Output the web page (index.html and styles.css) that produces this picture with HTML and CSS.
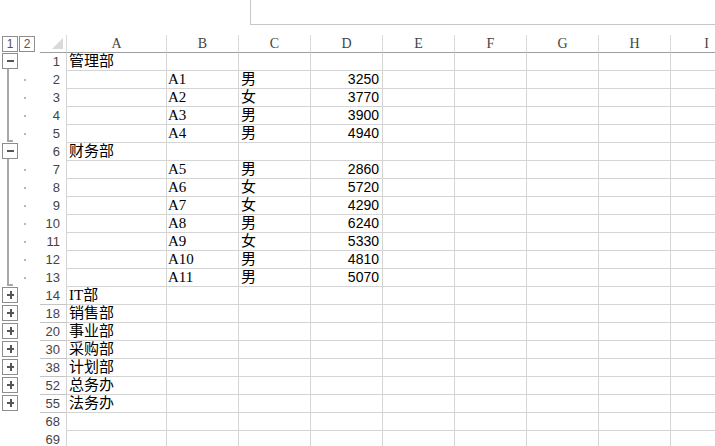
FILE: index.html
```html
<!DOCTYPE html>
<html>
<head>
<meta charset="utf-8">
<link rel="stylesheet" href="styles.css">
</head>
<body>
<div class="sheet">
  <div class="topbar"><div class="fbox"></div></div>

  <div class="row head">
    <div class="ol lv"><span class="lvbtn">1</span><span class="lvbtn">2</span></div>
    <div class="rn corner"><span class="tri"></span></div>
    <div class="c a ch">A</div><div class="c ch">B</div><div class="c ch">C</div><div class="c ch">D</div>
    <div class="c ch">E</div><div class="c ch">F</div><div class="c ch">G</div><div class="c ch">H</div><div class="c ch">I</div>
  </div>

  <div class="row"><div class="ol open"><span class="btn minus"></span></div><div class="rn">1</div>
    <div class="c a zh">管理部</div><div class="c"></div><div class="c"></div><div class="c"></div><div class="c"></div><div class="c"></div><div class="c"></div><div class="c"></div><div class="c"></div></div>
  <div class="row"><div class="ol line"><span class="dot"></span></div><div class="rn">2</div>
    <div class="c a"></div><div class="c t">A1</div><div class="c zh">男</div><div class="c n">3250</div><div class="c"></div><div class="c"></div><div class="c"></div><div class="c"></div><div class="c"></div></div>
  <div class="row"><div class="ol line"><span class="dot"></span></div><div class="rn">3</div>
    <div class="c a"></div><div class="c t">A2</div><div class="c zh">女</div><div class="c n">3770</div><div class="c"></div><div class="c"></div><div class="c"></div><div class="c"></div><div class="c"></div></div>
  <div class="row"><div class="ol line"><span class="dot"></span></div><div class="rn">4</div>
    <div class="c a"></div><div class="c t">A3</div><div class="c zh">男</div><div class="c n">3900</div><div class="c"></div><div class="c"></div><div class="c"></div><div class="c"></div><div class="c"></div></div>
  <div class="row"><div class="ol end"><span class="dot"></span></div><div class="rn">5</div>
    <div class="c a"></div><div class="c t">A4</div><div class="c zh">男</div><div class="c n">4940</div><div class="c"></div><div class="c"></div><div class="c"></div><div class="c"></div><div class="c"></div></div>

  <div class="row"><div class="ol open"><span class="btn minus"></span></div><div class="rn">6</div>
    <div class="c a zh">财务部</div><div class="c"></div><div class="c"></div><div class="c"></div><div class="c"></div><div class="c"></div><div class="c"></div><div class="c"></div><div class="c"></div></div>
  <div class="row"><div class="ol line"><span class="dot"></span></div><div class="rn">7</div>
    <div class="c a"></div><div class="c t">A5</div><div class="c zh">男</div><div class="c n">2860</div><div class="c"></div><div class="c"></div><div class="c"></div><div class="c"></div><div class="c"></div></div>
  <div class="row"><div class="ol line"><span class="dot"></span></div><div class="rn">8</div>
    <div class="c a"></div><div class="c t">A6</div><div class="c zh">女</div><div class="c n">5720</div><div class="c"></div><div class="c"></div><div class="c"></div><div class="c"></div><div class="c"></div></div>
  <div class="row"><div class="ol line"><span class="dot"></span></div><div class="rn">9</div>
    <div class="c a"></div><div class="c t">A7</div><div class="c zh">女</div><div class="c n">4290</div><div class="c"></div><div class="c"></div><div class="c"></div><div class="c"></div><div class="c"></div></div>
  <div class="row"><div class="ol line"><span class="dot"></span></div><div class="rn">10</div>
    <div class="c a"></div><div class="c t">A8</div><div class="c zh">男</div><div class="c n">6240</div><div class="c"></div><div class="c"></div><div class="c"></div><div class="c"></div><div class="c"></div></div>
  <div class="row"><div class="ol line"><span class="dot"></span></div><div class="rn">11</div>
    <div class="c a"></div><div class="c t">A9</div><div class="c zh">女</div><div class="c n">5330</div><div class="c"></div><div class="c"></div><div class="c"></div><div class="c"></div><div class="c"></div></div>
  <div class="row"><div class="ol line"><span class="dot"></span></div><div class="rn">12</div>
    <div class="c a"></div><div class="c t">A10</div><div class="c zh">男</div><div class="c n">4810</div><div class="c"></div><div class="c"></div><div class="c"></div><div class="c"></div><div class="c"></div></div>
  <div class="row"><div class="ol end"><span class="dot"></span></div><div class="rn">13</div>
    <div class="c a"></div><div class="c t">A11</div><div class="c zh">男</div><div class="c n">5070</div><div class="c"></div><div class="c"></div><div class="c"></div><div class="c"></div><div class="c"></div></div>

  <div class="row"><div class="ol"><span class="btn plus"></span></div><div class="rn hid">14</div>
    <div class="c a zh">IT部</div><div class="c"></div><div class="c"></div><div class="c"></div><div class="c"></div><div class="c"></div><div class="c"></div><div class="c"></div><div class="c"></div></div>
  <div class="row"><div class="ol"><span class="btn plus"></span></div><div class="rn hid">18</div>
    <div class="c a zh">销售部</div><div class="c"></div><div class="c"></div><div class="c"></div><div class="c"></div><div class="c"></div><div class="c"></div><div class="c"></div><div class="c"></div></div>
  <div class="row"><div class="ol"><span class="btn plus"></span></div><div class="rn hid">20</div>
    <div class="c a zh">事业部</div><div class="c"></div><div class="c"></div><div class="c"></div><div class="c"></div><div class="c"></div><div class="c"></div><div class="c"></div><div class="c"></div></div>
  <div class="row"><div class="ol"><span class="btn plus"></span></div><div class="rn hid">30</div>
    <div class="c a zh">采购部</div><div class="c"></div><div class="c"></div><div class="c"></div><div class="c"></div><div class="c"></div><div class="c"></div><div class="c"></div><div class="c"></div></div>
  <div class="row"><div class="ol"><span class="btn plus"></span></div><div class="rn hid">38</div>
    <div class="c a zh">计划部</div><div class="c"></div><div class="c"></div><div class="c"></div><div class="c"></div><div class="c"></div><div class="c"></div><div class="c"></div><div class="c"></div></div>
  <div class="row"><div class="ol"><span class="btn plus"></span></div><div class="rn hid">52</div>
    <div class="c a zh">总务办</div><div class="c"></div><div class="c"></div><div class="c"></div><div class="c"></div><div class="c"></div><div class="c"></div><div class="c"></div><div class="c"></div></div>
  <div class="row"><div class="ol"><span class="btn plus"></span></div><div class="rn hid">55</div>
    <div class="c a zh">法务办</div><div class="c"></div><div class="c"></div><div class="c"></div><div class="c"></div><div class="c"></div><div class="c"></div><div class="c"></div><div class="c"></div></div>
  <div class="row"><div class="ol"></div><div class="rn">68</div>
    <div class="c a"></div><div class="c"></div><div class="c"></div><div class="c"></div><div class="c"></div><div class="c"></div><div class="c"></div><div class="c"></div><div class="c"></div></div>
  <div class="row"><div class="ol"></div><div class="rn">69</div>
    <div class="c a"></div><div class="c"></div><div class="c"></div><div class="c"></div><div class="c"></div><div class="c"></div><div class="c"></div><div class="c"></div><div class="c"></div></div>
</div>
</body>
</html>
```

FILE: styles.css
```css
html, body {
  margin: 0;
  padding: 0;
  background: #ffffff;
}
.sheet {
  width: 715px;
  height: 446px;
  overflow: hidden;
  font-family: "Liberation Serif", "Noto Sans CJK SC", serif;
  color: #000;
}
.topbar {
  height: 35px;
}
.fbox {
  margin-left: 250px;
  height: 25px;
  box-sizing: border-box;
  border-left: 1px solid #c6c6c6;
  border-bottom: 1px solid #c6c6c6;
}
.row {
  display: flex;
  height: 18px;
  white-space: nowrap;
}
.ol {
  position: relative;
  flex: 0 0 40px;
  height: 18px;
  display: flex;
  align-items: flex-start;
}
.rn {
  flex: 0 0 27px;
  box-sizing: border-box;
  height: 18px;
  border-right: 1px solid #d4d4d4;
  text-align: right;
  padding-right: 6px;
  font-family: "Liberation Sans", sans-serif;
  font-size: 13px;
  line-height: 18px;
  color: #444;
}
.rn.hid {
  border-bottom: 1px solid #c4c4c4;
}
.c {
  flex: 0 0 72px;
  box-sizing: border-box;
  height: 18px;
  border-right: 1px solid #d4d4d4;
  border-bottom: 1px solid #d4d4d4;
  font-size: 14px;
  line-height: 17px;
  padding: 0 2px;
  overflow: hidden;
}
.c.a {
  flex-basis: 100px;
  padding-left: 2px;
}
.zh {
  font-size: 15px;
}
.t {
  padding-left: 1px;
  font-size: 15px;
}
.n {
  text-align: right;
  font-family: "Liberation Sans", sans-serif;
  font-size: 14px;
  padding-right: 3px;
}

/* header */
.head .ch {
  border-right-color: #dadada;
  border-bottom: 1px solid #9e9e9e;
  text-align: center;
  color: #444;
  font-size: 14px;
  line-height: 18px;
}
.head .rn {
  border-right-color: #dadada;
  border-bottom: 1px solid #9e9e9e;
  display: flex;
  align-items: flex-end;
  justify-content: flex-end;
  padding: 0 3px 3px 0;
}
.tri {
  width: 0;
  height: 0;
  border-left: 11px solid transparent;
  border-bottom: 11px solid #d9d9d9;
}
.ol.lv {
  gap: 1px;
  padding: 1px 0 0 2px;
  box-sizing: border-box;
}
.lvbtn {
  width: 16px;
  height: 16px;
  box-sizing: border-box;
  border: 1px solid #8e8e8e;
  font-family: "Liberation Sans", sans-serif;
  font-size: 12px;
  line-height: 14px;
  text-align: center;
  color: #555;
}

/* outline symbols */
.btn {
  margin-left: 2px;
  width: 16px;
  height: 16px;
  box-sizing: border-box;
  border: 1px solid #8e8e8e;
  position: relative;
  background: #fff;
}
.minus::before,
.plus::before,
.plus::after {
  content: "";
  position: absolute;
  background: #555;
}
.minus::before,
.plus::before {
  left: 4px;
  top: 6px;
  width: 7px;
  height: 2px;
}
.plus::after {
  left: 7px;
  top: 3px;
  width: 2px;
  height: 8px;
  background: #555;
}
.dot {
  margin: 8px 0 0 24px;
  width: 2px;
  height: 2px;
  background: #b8b8b8;
}
.ol.line::before,
.ol.end::before,
.ol.open::after {
  content: "";
  position: absolute;
  left: 7px;
  width: 2px;
  background: #a8a8a8;
}
.ol.line::before {
  top: 0;
  bottom: 0;
}
.ol.open::after {
  top: 16px;
  bottom: 0;
}
.ol.end::before {
  top: 0;
  bottom: 1px;
}
.ol.end::after {
  content: "";
  position: absolute;
  left: 7px;
  bottom: 1px;
  width: 6px;
  height: 2px;
  background: #a8a8a8;
}
```
